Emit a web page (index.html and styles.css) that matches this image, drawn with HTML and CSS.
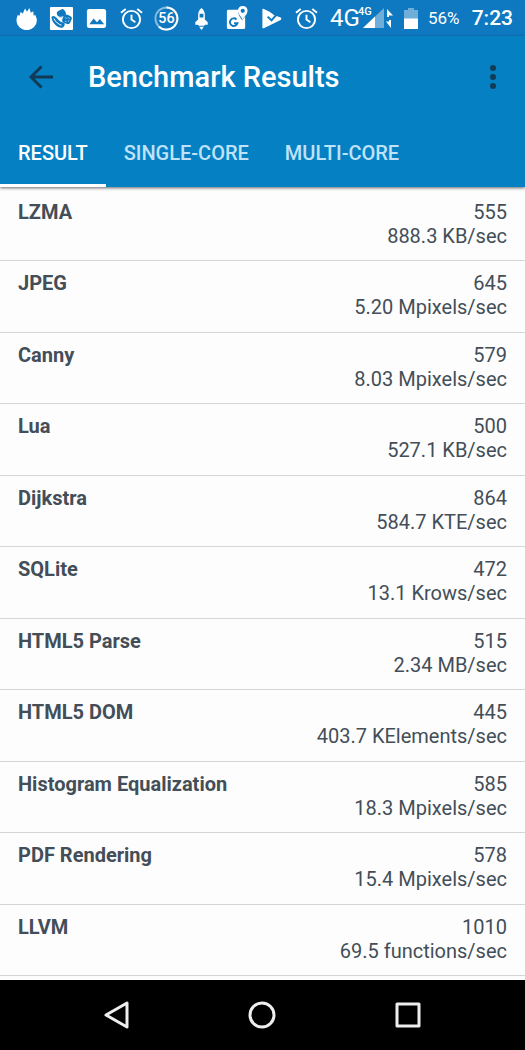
FILE: index.html
```html
<!DOCTYPE html>
<html lang="en">
<head>
    <meta charset="UTF-8">
    <meta name="viewport" content="width=device-width, initial-scale=1.0">
    <title>Benchmark Results</title>
    <link rel="stylesheet" href="styles.css">
</head>
<body>
    <div class="status-bar">
        <div class="notifications">
            <svg class="icon" viewBox="0 0 24 24"><path d="M3 8l1.500 1.500L6 5l2 2 2.500-5.500L12.500 5 15 1l1.500 5L19 4.500l.5 4.500 1.500-1c1 2 1.800 4 1.800 6A10.500 10 0 0 1 1.500 14c0-2 .5-4 1.500-6z"/></svg>
            <svg class="icon icon-large" viewBox="0 0 26 26">
                <rect x="1" y="1" width="24" height="24" rx="1"/>
                <g class="ink"><rect x="8.500" y="4" width="9" height="7.500" rx="3" transform="rotate(-30 13 8)"/><rect x="14.500" y="9" width="9" height="9" rx="3" transform="rotate(25 18 13)"/><path d="M2.500 11.500c2-2 4-1 6 1.500s4 4 7.500 4.500c1 2 0 4-2 5-5 1-11-5-11.500-11z"/></g>
                <path class="paper-line" d="M9 11c2 1 4 1 5 0M5 13c2 4 5 6 8 7M17 12l1 1M20 12l1 1M17 16h1M20 16l1-1"/>
            </svg>
            <svg class="icon" viewBox="0 0 24 24"><rect x="2" y="2" width="20" height="20" rx="2.500"/><path class="ink" d="M4.500 18l4.500-6 3.500 4 3-3.500 4.500 5.500z"/></svg>
            <svg class="icon line" viewBox="0 0 24 24"><circle cx="12" cy="13" r="9"/><path d="M12 8v5l4 3M1 6l5-4M23 6l-5-4"/></svg>
            <svg class="icon icon-large ring" viewBox="0 0 26 26"><circle class="faint" cx="13" cy="13" r="11.500"/><path d="M13 1.500a11.500 11.500 0 1 1-8 20"/><text x="13" y="18">56</text></svg>
            <svg class="icon" viewBox="0 0 24 24"><path fill-rule="evenodd" d="M12 1c2.500 2 3.500 4.500 3.500 7v5l3 3v2.500h-3l-.5 1H9l-.5-1h-3V16l3-3V8c0-2.500 1-5 3.500-7zM10 7v4h4V7zM9.500 20.500h5L12 24z"/></svg>
            <svg class="icon icon-large" viewBox="0 0 26 26"><path d="M5 4h10c-1 5 2 8 4 11l3-4v11c0 1.500-1 2-2 2H5c-1.500 0-2-1-2-2V6c0-1.500.5-2 2-2z"/><path class="ink-line" d="M13 14a4 4 0 1 0 1 4h-3.500"/><path fill-rule="evenodd" d="M19.500 0c3 0 5 2 5 5 0 4-4 6-5 10-1-4-5-6-5-10 0-3 2-5 5-5zm0 2.800a2.200 2.200 0 1 0 0 4.400 2.200 2.200 0 0 0 0-4.400z"/></svg>
            <svg class="icon" viewBox="0 0 24 24"><path d="M4 2l6 3L15 8.500l6.500 2.500c1 .7 1 1.700 0 2.500L4.500 22c-1.500.5-2 0-2-1V3c0-1 .5-1.500 1.500-1z"/><path class="ink-line" d="M8 10l4 4 7-8"/></svg>
            <svg class="icon line" viewBox="0 0 24 24"><circle cx="12" cy="13" r="9"/><path d="M12 8v5l4 3M1 6l5-4M23 6l-5-4"/></svg>
        </div>
        <span class="network">4G</span>
        <div class="signal">
            <span class="signal-type">4G</span>
            <svg class="signal-icon" viewBox="0 0 32 22"><path class="faint-fill" d="M21 1v20H0z"/><path d="M12 9.500V21H0z"/><path d="M24 2l6 6.500h-4V10h-2zM28 21l-5-6.500h3V13h2z"/></svg>
        </div>
        <svg class="battery" viewBox="0 0 14 21"><path class="faint-fill" d="M4 0h6v2h4v9H0V2h4z"/><path d="M0 10.500h14V21H0z"/></svg>
        <span class="percent">56%</span>
        <span class="clock">7:23</span>
    </div>

    <header class="header">
        <div class="toolbar">
            <button class="icon-btn" aria-label="Back"><svg class="back" viewBox="0 0 24 24"><path d="M12.500 1.500L2 12l10.500 10.500M2 12h22"/></svg></button>
            <h1>Benchmark Results</h1>
            <button class="icon-btn menu-btn" aria-label="More options"><svg class="dots" viewBox="0 0 6 24"><circle cx="3" cy="3" r="3"/><circle cx="3" cy="12" r="3"/><circle cx="3" cy="21" r="3"/></svg></button>
        </div>
        <nav class="tabs">
            <a class="tab active" href="#result">RESULT</a>
            <a class="tab" href="#single">SINGLE-CORE</a>
            <a class="tab" href="#multi">MULTI-CORE</a>
        </nav>
    </header>

    <main class="results" id="result">
        <table>
            <tbody>
                <tr><th scope="row">LZMA</th><td>555<br>888.3 KB/sec</td></tr>
                <tr><th scope="row">JPEG</th><td>645<br>5.20 Mpixels/sec</td></tr>
                <tr><th scope="row">Canny</th><td>579<br>8.03 Mpixels/sec</td></tr>
                <tr><th scope="row">Lua</th><td>500<br>527.1 KB/sec</td></tr>
                <tr><th scope="row">Dijkstra</th><td>864<br>584.7 KTE/sec</td></tr>
                <tr><th scope="row">SQLite</th><td>472<br>13.1 Krows/sec</td></tr>
                <tr><th scope="row">HTML5 Parse</th><td>515<br>2.34 MB/sec</td></tr>
                <tr><th scope="row">HTML5 DOM</th><td>445<br>403.7 KElements/sec</td></tr>
                <tr><th scope="row">Histogram Equalization</th><td>585<br>18.3 Mpixels/sec</td></tr>
                <tr><th scope="row">PDF Rendering</th><td>578<br>15.4 Mpixels/sec</td></tr>
                <tr><th scope="row">LLVM</th><td>1010<br>69.5 functions/sec</td></tr>
            </tbody>
        </table>
    </main>

    <div class="nav-bar">
        <button class="nav-btn" aria-label="Back"><svg viewBox="0 0 28 28"><path d="M24 2v24L3 14z"/></svg></button>
        <button class="nav-btn" aria-label="Home"><svg viewBox="0 0 28 28"><circle cx="14" cy="14" r="12"/></svg></button>
        <button class="nav-btn" aria-label="Recent apps"><svg viewBox="0 0 28 28"><rect x="3" y="3" width="22" height="22"/></svg></button>
    </div>
</body>
</html>
```
FILE: styles.css
```css
* {
    box-sizing: border-box;
}
body {
    display: flex;
    flex-direction: column;
    min-height: 100vh;
    margin: 0;
    font-family: Roboto, "Liberation Sans", sans-serif;
    background-color: #fdfdfd;
    color: #434e58;
}
button {
    display: flex;
    align-items: center;
    justify-content: center;
    padding: 0;
    border: none;
    background: none;
    cursor: pointer;
}

/* Status bar */
.status-bar {
    display: flex;
    align-items: center;
    height: 36px;
    padding: 0 12px 0 9px;
    background-color: #0e79c0;
    color: #fff;
}
.status-bar svg {
    flex: none;
    fill: #fff;
}
.notifications {
    display: flex;
    flex: none;
    align-items: center;
}
.icon {
    width: 23px;
    height: 23px;
    margin: 0 6px;
}
.icon-large {
    width: 25px;
    height: 25px;
    margin: 0 5px;
}
.status-bar .ink {
    fill: #0e79c0;
}
.status-bar .ink-line {
    fill: none;
    stroke: #0e79c0;
    stroke-width: 2;
}
.status-bar .paper-line {
    fill: none;
    stroke: #fff;
    stroke-width: 1;
}
.status-bar .line {
    fill: none;
    stroke: #fff;
    stroke-width: 2;
}
.ring circle,
.ring path {
    fill: none;
    stroke: #fff;
    stroke-width: 2;
}
.ring .faint {
    stroke-opacity: 0.5;
}
.ring text {
    font-size: 15px;
    font-weight: 500;
    text-anchor: middle;
}
.faint-fill {
    fill-opacity: 0.4;
}
.network {
    width: 30px;
    margin-left: 6px;
    font-size: 24px;
}
.signal {
    position: relative;
    flex: none;
    height: 22px;
    margin-left: 3px;
}
.signal-icon {
    display: block;
    width: 32px;
    height: 22px;
}
.signal-type {
    position: absolute;
    top: -2px;
    left: -5px;
    font-size: 11px;
    font-weight: 500;
}
.battery {
    width: 14px;
    height: 21px;
    margin-left: 9px;
}
.percent {
    margin-left: 10px;
    font-size: 17px;
}
.clock {
    margin-left: auto;
    font-size: 21px;
    font-weight: 500;
}

/* Header */
.header {
    position: relative;
    background-color: #0580c3;
    box-shadow: 0 1px 3px rgba(0, 0, 0, 0.6);
}
.toolbar {
    display: flex;
    align-items: center;
    height: 82px;
    padding: 0 9px 0 18px;
}
.icon-btn {
    width: 46px;
    height: 46px;
}
.back {
    width: 24px;
    height: 24px;
    fill: none;
    stroke: #103a55;
    stroke-width: 3;
}
.dots {
    width: 6px;
    height: 24px;
    fill: #103a55;
}
.menu-btn {
    width: 46px;
    margin-left: auto;
}
h1 {
    margin: 0 0 0 24px;
    font-size: 29px;
    font-weight: 500;
    color: #fff;
}
.tabs {
    display: flex;
    height: 69px;
}
.tab {
    padding: 0 18px;
    border-bottom: 3px solid transparent;
    font-size: 20px;
    font-weight: 500;
    line-height: 70px;
    height: 69px;
    color: #c0e2f8;
    text-decoration: none;
}
.tab.active {
    border-color: #fff;
    color: #fff;
}

/* Results list */
.results {
    display: flex;
    flex: 1;
    padding: 3px 0 4px;
}
table {
    display: flex;
    width: 100%;
}
tbody {
    display: grid;
    flex: 1;
    grid-auto-rows: 1fr;
}
tr {
    display: flex;
    justify-content: space-between;
    padding: 10px 18px 0;
    border-bottom: 1px solid #d6d6d6;
    font-size: 20px;
    line-height: 24px;
}
th,
td {
    padding: 0;
}
th {
    text-align: left;
}
td {
    text-align: right;
}

/* Navigation bar */
.nav-bar {
    display: flex;
    justify-content: space-around;
    align-items: center;
    height: 70px;
    padding: 0 44px;
    background-color: #000;
}
.nav-btn {
    width: 48px;
    height: 48px;
}
.nav-btn svg {
    width: 28px;
    height: 28px;
    fill: none;
    stroke: #eee;
    stroke-width: 3;
    stroke-linejoin: round;
}
```
